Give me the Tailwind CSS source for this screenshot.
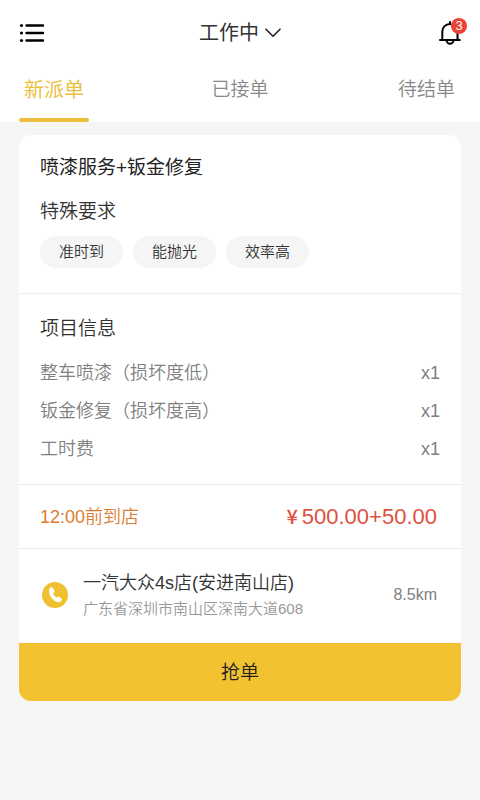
<!DOCTYPE html>
<html lang="zh-CN">
<head>
<meta charset="utf-8">
<meta name="viewport" content="width=device-width, initial-scale=1">
<title>工作中</title>
<script src="https://cdn.jsdelivr.net/npm/@tailwindcss/browser@4"></script>
</head>
<body class="min-h-screen bg-[#f5f5f5] font-['Liberation_Sans','Noto_Sans_CJK_SC',sans-serif] font-[350] text-[#333]">
<header class="bg-white">
  <div class="grid h-[58px] grid-cols-[1fr_auto_1fr] items-center px-[19px] pt-2">
    <button type="button" aria-label="菜单" class="justify-self-start">
      <svg class="block" width="26" height="22" viewBox="0 0 26 22" fill="#000" aria-hidden="true">
        <circle cx="2.5" cy="3.5" r="1.6"/><circle cx="2.5" cy="11" r="1.6"/><circle cx="2.5" cy="18.5" r="1.6"/>
        <path d="M7.5 3.5H24M7.5 11H24M7.5 18.5H24" stroke="#000" stroke-width="2.4" stroke-linecap="round"/>
      </svg>
    </button>
    <button type="button" class="flex items-center gap-1.5 text-[20px] leading-7 font-normal">工作中
      <svg class="block" width="16" height="10" viewBox="0 0 16 10" fill="none" stroke="#222" stroke-width="1.6" stroke-linecap="round" stroke-linejoin="round" aria-hidden="true"><path d="M1 1.200 8 8.200 15 1.200"/></svg>
    </button>
    <button type="button" aria-label="通知" class="relative justify-self-end">
      <svg class="block" width="23" height="26" viewBox="0 0 23 26" fill="none" stroke="#000" stroke-width="2" stroke-linecap="round" stroke-linejoin="round" aria-hidden="true">
        <path d="M12 2v2M4.300 19.500V11.500a7.600 7.600 0 0 1 15.200 0v8M2 20H21.800M8.600 20.500a3.400 3.200 0 0 0 6.800 0"/>
      </svg>
      <span class="absolute -top-0.5 -right-[6px] flex size-4 items-center justify-center rounded-full bg-[#ea4335] text-[13px] leading-4 text-white">3</span>
    </button>
  </div>
  <nav class="grid h-16 grid-cols-[1fr_auto_1fr] px-[19px] text-[19px] leading-8 text-[#888]">
    <a href="#new" aria-current="page" class="flex flex-col justify-between justify-self-start text-[20px] font-normal text-[#ebc03c]"><span class="px-[5px] pt-4">新派单</span><span class="h-1 rounded-full bg-[#ebc03c]"></span></a>
    <a href="#accepted" class="pt-4">已接单</a>
    <a href="#pending" class="justify-self-end pt-4 pr-1.5">待结单</a>
  </nav>
</header>
<main class="px-[19px] py-[13px]">
  <article class="overflow-hidden rounded-xl bg-white">
    <section class="border-b border-[#eee] px-[21px] pt-[19px] pb-[25px]">
      <h1 class="text-[19px] leading-7 font-normal text-[#222]">喷漆服务+钣金修复</h1>
      <h2 class="mt-4 text-[19px] leading-7">特殊要求</h2>
      <ul class="mt-2.5 flex gap-2.5 text-[15px] leading-8">
        <li class="rounded-full bg-[#f5f5f5] px-[19px]">准时到</li>
        <li class="rounded-full bg-[#f5f5f5] px-[19px]">能抛光</li>
        <li class="rounded-full bg-[#f5f5f5] px-[19px]">效率高</li>
      </ul>
    </section>
    <section class="border-b border-[#eee] px-[21px] pt-[21px] pb-4">
      <h2 class="text-[19px] leading-7">项目信息</h2>
      <dl class="mt-[11px] text-[18px] leading-[38px] text-[#808080]">
        <div class="flex justify-between"><dt>整车喷漆（损坏度低）</dt><dd>x1</dd></div>
        <div class="flex justify-between"><dt>钣金修复（损坏度高）</dt><dd>x1</dd></div>
        <div class="flex justify-between"><dt>工时费</dt><dd>x1</dd></div>
      </dl>
    </section>
    <section class="flex h-16 items-center justify-between border-b border-[#eee] pr-6 pl-[21px]">
      <p class="text-[18px] leading-7 text-[#dc7c30]">12:00前到店</p>
      <p class="flex items-baseline gap-1 text-[22px] leading-7 text-[#df5140]"><span class="font-['Noto_Sans_CJK_SC',sans-serif] text-[20px] font-medium">¥</span>500.00+50.00</p>
    </section>
    <section class="flex h-[94px] items-center pr-6 pb-0.5 pl-[23px]">
      <a href="#call" aria-label="拨打电话">
        <svg class="block" width="26" height="26" viewBox="0 0 26 26" aria-hidden="true">
          <circle cx="13" cy="13" r="13" fill="#efc030"/>
          <path d="M8.900 8.500C8.400 12.500 11.800 17.500 16.500 18.500" fill="none" stroke="#fff" stroke-width="3.600" stroke-linecap="round"/>
          <path d="M9.300 7.200L10.600 9.200M16.200 16.600L18 17.800" fill="none" stroke="#fff" stroke-width="3.800" stroke-linecap="round"/>
        </svg>
      </a>
      <div class="ml-[15px] flex-1">
        <h2 class="text-[18px] leading-7">一汽大众4s店(安进南山店)</h2>
        <p class="text-[15px] leading-6 text-[#999]">广东省深圳市南山区深南大道608</p>
      </div>
      <span class="text-[16px] leading-6 text-[#808080]">8.5km</span>
    </section>
    <button type="button" class="block h-[58px] w-full bg-[#f2c230] pt-0.5 text-[19px] leading-7 text-[#222]">抢单</button>
  </article>
</main>
</body>
</html>
